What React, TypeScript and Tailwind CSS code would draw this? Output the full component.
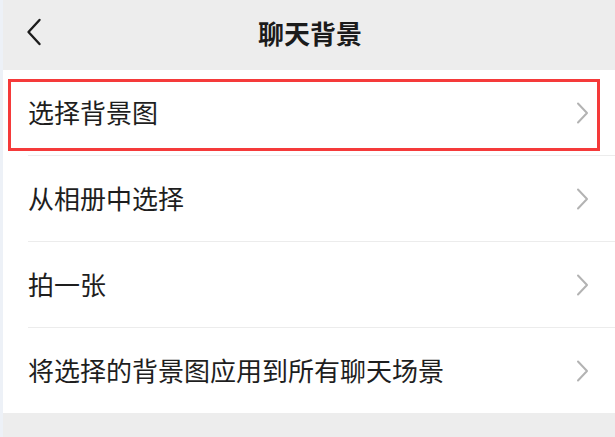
import React from "react";

const Chevron = () => (
  <svg width="13" height="22" viewBox="0 0 13 22" className="shrink-0">
    <path d="M2 1.5 L11 11 L2 20.5" fill="none" stroke="#b3b3b3" strokeWidth="2" strokeLinecap="round" strokeLinejoin="round" />
  </svg>
);

const items = ["选择背景图", "从相册中选择", "拍一张", "将选择的背景图应用到所有聊天场景"];

export default function App() {
  return (
    <div
      className="relative flex w-[615px] h-[437px] overflow-hidden bg-[#ededed]"
      style={{ fontFamily: '"Noto Sans CJK SC", "Noto Sans", sans-serif' }}
    >
      <div className="w-[3px] shrink-0 bg-[#edf1f7]" />
      <div className="flex flex-1 flex-col">
        <div className="relative flex h-[70px] shrink-0 items-center justify-center bg-[#ededed]">
          <svg width="16" height="28" viewBox="0 0 16 28" className="absolute left-[23px] top-[18px]">
            <path d="M13.5 2 L2.5 14 L13.5 26" fill="none" stroke="#1c1c1c" strokeWidth="2.4" strokeLinecap="round" strokeLinejoin="round" />
          </svg>
          <span className="text-[26px] font-bold leading-none text-[#1b1b1b] ml-[2px] -mt-[4px]">聊天背景</span>
        </div>
        <div className="flex flex-col bg-white">
          {items.map((t, i) => (
            <div key={t} className="flex flex-col">
              {i > 0 && <div className="ml-[25px] h-px bg-[#ececec]" />}
              <div className="flex h-[85px] items-center justify-between pl-[25px] pr-[26px]">
                <span className="text-[26px] leading-none text-[#1e1e1e] -mt-[1px]">{t}</span>
                <Chevron />
              </div>
            </div>
          ))}
        </div>
      </div>
      <div className="pointer-events-none absolute left-[8px] top-[79px] h-[72px] w-[592px] border-[3px] border-[#f53a3a]" />
    </div>
  );
}
